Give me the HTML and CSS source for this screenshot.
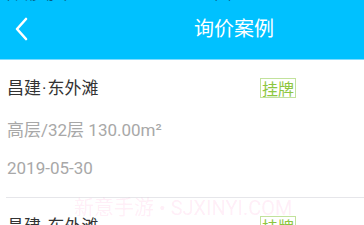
FILE: index.html
```html
<!DOCTYPE html>
<html lang="zh">
<head>
<meta charset="utf-8">
<link rel="stylesheet" href="styles.css">
</head>
<body>
<div class="header">
  <div class="status"><span class="st-left">中国移动 令</span><span class="st-mid">下午3:28</span></div>
  <div class="nav">
    <svg class="back" width="14" height="24" viewBox="0 0 14 24"><path d="M12 2 L3 12 L12 22" fill="none" stroke="#fff" stroke-width="2.6" stroke-linecap="round" stroke-linejoin="round"/></svg>
    <div class="title">询价案例</div>
  </div>
</div>
<div class="list">
  <div class="item">
    <div class="row">
      <div class="name">昌建<span class="dot">·</span>东外滩</div>
      <div class="tag">挂牌</div>
    </div>
    <div class="info">高层/32层 130.00m²</div>
    <div class="date">2019-05-30</div>
  </div>
  <div class="item">
    <div class="row">
      <div class="name">昌建<span class="dot">·</span>东外滩</div>
      <div class="tag">挂牌</div>
    </div>
    <div class="info">高层/32层 130.00m²</div>
    <div class="date">2019-05-30</div>
  </div>
  <div class="watermark">新意手游 • SJXINYI.COM</div>
</div>
</body>
</html>
```

FILE: styles.css
```css
html, body {
  margin: 0;
  padding: 0;
  background: #fff;
  font-family: Roboto, "Noto Sans CJK SC", sans-serif;
  overflow: hidden;
}
.header {
  background: #00c1ff;
  height: 59px;
  border-bottom: 1px solid #7fdcff;
  overflow: hidden;
}
.status {
  height: 2px;
  overflow: hidden;
  position: relative;
}
.status span {
  position: absolute;
  top: -12px;
  font-size: 13px;
  line-height: 13px;
  color: #0a3550;
  opacity: 0.7;
}
.st-left { left: 2px; }
.st-mid { left: 210px; }
.nav {
  height: 57px;
  display: flex;
  align-items: center;
  position: relative;
}
.back {
  margin-left: 14px;
  margin-top: -4px;
}
.title {
  position: absolute;
  left: 194px;
  top: 12px;
  font-size: 20px;
  line-height: 28px;
  color: #fff;
  font-family: "Noto Sans CJK SC", sans-serif;
}
.list {
  position: relative;
}
.item {
  margin-left: 6px;
  padding: 18px 0 19px 1px;
  border-bottom: 1px solid #e6e6ea;
}
.row {
  display: grid;
  grid-template-columns: 253px auto;
  align-items: center;
  height: 20px;
}
.name {
  font-size: 17px;
  line-height: 20px;
  color: #333;
}
.dot {
  padding: 0 1px;
}
.tag {
  justify-self: start;
  font-size: 16px;
  line-height: 18px;
  padding: 0 1px;
  color: #8dc63f;
  border: 1px solid #c2e29c;
  font-family: "Noto Sans CJK SC", sans-serif;
}
.info {
  margin-top: 22px;
  font-size: 17px;
  line-height: 20px;
  color: #a8a8a8;
}
.date {
  margin-top: 18px;
  font-size: 17px;
  line-height: 20px;
  color: #a8a8a8;
}
.watermark {
  position: absolute;
  left: 74px;
  top: 132px;
  font-size: 20px;
  color: rgba(255, 90, 180, 0.1);
  white-space: nowrap;
}
```
